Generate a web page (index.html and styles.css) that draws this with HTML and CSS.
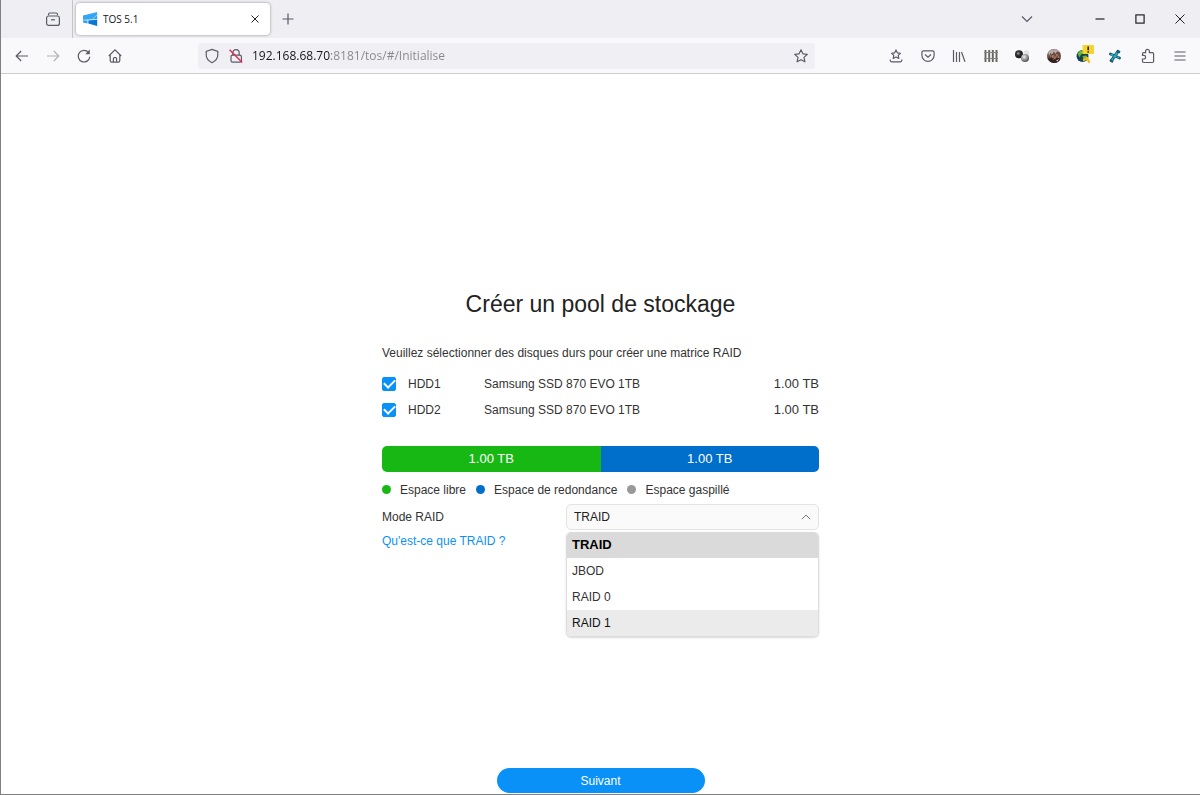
FILE: index.html
```html
<!DOCTYPE html>
<html lang="fr">
<head>
<meta charset="utf-8">
<meta name="viewport" content="width=device-width, initial-scale=1">
<title>TOS 5.1</title>
<link rel="stylesheet" href="styles.css">
</head>
<body class="window">
<header class="chrome">
  <div class="tabbar">
    <div class="tabbar-start">
      <button class="icon-btn" aria-label="Firefox View"><svg width="16" height="16" viewBox="0 0 16 16" class="stroke"><path d="M3.500 4.200V3.500Q3.500 2 5 2h6q1.500 0 1.500 1.500v.7"/><rect x="1.600" y="5" width="12.800" height="9.400" rx="2"/><path d="M6 8.800h4"/></svg></button>
    </div>
    <div class="tab">
      <svg class="favicon" width="15" height="14" viewBox="0 0 15 14"><path d="M0 3.600L14.200 0v7.200L0 8z" fill="#35a6f5"/><path d="M0 8.300l4.600-.1v3.200L0 10.600z" fill="#2b9df0"/><path d="M5.200 8.200l9-.5V14l-9-2.400z" fill="#0878d0"/><path d="M4.900 8v4M0 8.200l14.200-.7M9 7.700L14 3" stroke="#d9efff" stroke-width=".5"/></svg>
      <span class="tab-title">TOS 5.1</span>
      <button class="icon-btn tab-close" aria-label="Fermer l'onglet"><svg width="10" height="10" viewBox="0 0 10 10" class="stroke dark thin"><path d="M1.500 1.500l7 7M8.500 1.500l-7 7"/></svg></button>
    </div>
    <button class="icon-btn new-tab" aria-label="Nouvel onglet"><svg width="12" height="12" viewBox="0 0 12 12" class="stroke"><path d="M6 .5v11M.5 6h11"/></svg></button>
    <div class="window-controls">
      <button class="icon-btn list-tabs" aria-label="Lister les onglets"><svg width="12" height="8" viewBox="0 0 12 8" class="stroke"><path d="M1 1.500l5 5 5-5"/></svg></button>
      <button class="icon-btn win-btn" aria-label="Réduire"><svg width="10" height="10" viewBox="0 0 10 10" class="stroke dark"><path d="M.5 5h9"/></svg></button>
      <button class="icon-btn win-btn" aria-label="Agrandir"><svg width="10" height="10" viewBox="0 0 10 10" class="stroke dark"><rect x=".9" y=".9" width="8.200" height="8.200"/></svg></button>
      <button class="icon-btn win-btn" aria-label="Fermer"><svg width="10" height="10" viewBox="0 0 10 10" class="stroke dark thin"><path d="M.5.5l9 9M9.500.5l-9 9"/></svg></button>
    </div>
  </div>
  <nav class="toolbar" aria-label="Navigation">
    <button class="icon-btn nav-btn" aria-label="Précédent"><svg width="16" height="16" viewBox="0 0 16 16" class="stroke"><path d="M14 8H2.300M7.200 3L2.200 8l5 5"/></svg></button>
    <button class="icon-btn nav-btn faded" aria-label="Page suivante"><svg width="16" height="16" viewBox="0 0 16 16" class="stroke"><path d="M2 8h11.700M8.800 3l5 5-5 5"/></svg></button>
    <button class="icon-btn nav-btn" aria-label="Actualiser"><svg width="16" height="16" viewBox="0 0 16 16" class="stroke"><path d="M12.600 4.600A5.800 5.800 0 1 0 13.800 8.800"/><path d="M13.800 1.600v4.700H9.200z" fill="#5b5b66" stroke="none"/></svg></button>
    <button class="icon-btn nav-btn" aria-label="Accueil"><svg width="16" height="16" viewBox="0 0 16 16" class="stroke"><path d="M1.800 8L8 1.900 14.200 8M3.200 7v5.600q0 1.600 1.600 1.600h6.400q1.600 0 1.600-1.600V7"/><path d="M6.400 14V10.600q0-1 1-1h1.200q1 0 1 1V14"/></svg></button>
    <div class="urlbar">
      <button class="icon-btn url-btn" aria-label="Protection"><svg width="16" height="16" viewBox="0 0 16 16" class="stroke"><path d="M8 1.400l5.800 2v3.400c0 3.700-2.100 6.200-5.800 7.900-3.700-1.700-5.800-4.200-5.800-7.900V3.400z"/></svg></button>
      <button class="icon-btn url-btn" aria-label="Connexion non sécurisée"><svg width="16" height="16" viewBox="0 0 16 16" class="stroke"><path d="M4.800 7.200V4.800a3.200 3.200 0 0 1 6.400 0v2.400"/><rect x="3" y="7.200" width="10.400" height="7" rx="1.600"/><path d="M1.600 1.800l12.600 12.600" stroke="#e22850" stroke-width="1.400"/></svg></button>
      <input class="url-input" type="text" aria-label="Adresse" value="192.168.68.70:8181/tos/#/Initialise">
      <button class="icon-btn url-btn" aria-label="Marquer cette page"><svg width="16" height="16" viewBox="0 0 16 16" class="stroke"><path d="M8 1.800l1.900 4 4.400.6-3.300 3 .9 4.400L8 11.700l-3.900 2.100.9-4.400-3.300-3 4.400-.6z" stroke-linejoin="round"/></svg></button>
    </div>
    <div class="tools">
      <button class="icon-btn tool" aria-label="Marque-pages"><svg width="14" height="14" viewBox="0 0 14 14" class="stroke"><path d="M7 1l1.400 2.900 3 .4-2.200 2.100.6 3.100L7 8 4.200 9.500l.6-3.100-2.200-2.100 3-.4z" stroke-linejoin="round"/><path d="M1.200 10.500v.8q0 1.500 1.500 1.500h8.600q1.500 0 1.500-1.500v-.8"/></svg></button>
      <button class="icon-btn tool" aria-label="Pocket"><svg width="14" height="14" viewBox="0 0 14 14" class="stroke"><path d="M2.400 1.800h9.200q1.500 0 1.500 1.500v3a6.100 6.100 0 0 1-12.200 0v-3q0-1.500 1.500-1.500z"/><path d="M4 5.500l3 2.800 3-2.800"/></svg></button>
      <button class="icon-btn tool" aria-label="Bibliothèque"><svg width="14" height="14" viewBox="0 0 14 14" class="stroke"><path d="M1.500 1v12M4.500 3v10M7.500 3v10M9.500 3l3.500 9.700"/></svg></button>
      <button class="icon-btn tool" aria-label="Conteneurs"><svg width="16" height="14" viewBox="0 0 16 14" class="stroke"><path d="M2.500 1v12M6.200 1v12M9.800 1v12M13.500 1v12" stroke="#66665f" stroke-width="1.900"/><path d="M1 3.500h14M1 9.500h14" stroke="#85857f" stroke-width="1"/></svg></button>
      <button class="icon-btn tool" aria-label="Extension billes"><svg width="16" height="16" viewBox="0 0 16 16"><defs><radialGradient id="ball-dark" cx=".4" cy=".4" r=".6"><stop offset="0" stop-color="#aaa"/><stop offset=".4" stop-color="#333"/><stop offset="1" stop-color="#111"/></radialGradient><radialGradient id="ball-light" cx=".4" cy=".35" r=".7"><stop offset="0" stop-color="#eee"/><stop offset=".5" stop-color="#999"/><stop offset="1" stop-color="#444"/></radialGradient></defs><circle cx="12.500" cy="5" r="2.800" fill="#e2e2e2"/><circle cx="5" cy="6.200" r="4" fill="url(#ball-dark)"/><circle cx="11" cy="10" r="4" fill="url(#ball-light)"/></svg></button>
      <button class="icon-btn tool" aria-label="Extension globe brun"><svg width="16" height="16" viewBox="0 0 16 16"><circle cx="8" cy="8" r="7" fill="#6b4a40"/><path d="M2.200 4.500Q5 1 9 1.200q3 .5 4.500 3L11 3.500 9.500 6 8 3.500 6 6.500 4.500 5 3 8z" fill="#b5aeac"/><path d="M4 7l2 3 1-3 2 4 2-5 2 4" stroke="#a97b6b" fill="none"/><path d="M1.500 10q3 1 4-1l2 3 3-2 4 .5Q13 15 8 15q-5-.5-6.500-5z" fill="#33221f"/><path d="M10 12.500l3-1.500-1.500 2.500z" fill="#c8c2be"/></svg></button>
      <button class="icon-btn tool" aria-label="Extension avec alerte"><svg width="20" height="22" viewBox="0 0 20 22"><circle cx="7.500" cy="11" r="6" fill="#14405c"/><path d="M2.500 8.500q3-4 6-3L8 8.500l-2 1-1.500 3zM7.500 11l4-.5 1 3-3.500 3z" fill="#6aba32"/><path d="M8 15.500l4-3M10 14l5 2.500M12.500 12l1.500 6" stroke="#f2bc13" stroke-width="1.600" fill="none"/><rect x="7.500" y="0" width="11.500" height="9" rx="1" fill="#f6d32d"/><path d="M13.200 1.500v3.700M13.200 6.200v1.500" stroke="#332b00" stroke-width="1.600"/></svg></button>
      <button class="icon-btn tool" aria-label="Extension X"><svg width="20" height="16" viewBox="0 0 20 16"><path d="M4.500 12.500L11 3.500M3.500 6l9 4" stroke="#1c5c70" stroke-width="3" stroke-linecap="round" fill="none"/><path d="M4.500 12.500L11 3.500M4 6.200l8 3.500" stroke="#2fb4cf" stroke-width="1.600" stroke-dasharray="2.500 1" fill="none"/><path d="M10 2.500l3 2M3 12l3 2" stroke="#1c5c70" stroke-width="2.200"/></svg></button>
      <button class="icon-btn tool" aria-label="Extensions"><svg width="14" height="16" viewBox="0 0 14 16" class="stroke"><path d="M4.600 4.700V3.200a1.900 1.900 0 0 1 3.800 0v1.500h3q1.200 0 1.200 1.200v7.400q0 1.200-1.200 1.200H2.700q-1.200 0-1.200-1.200V11h1.300a1.800 1.800 0 0 0 0-3.600H1.500V5.900q0-1.200 1.200-1.200z"/></svg></button>
      <button class="icon-btn tool" aria-label="Menu"><svg width="12" height="12" viewBox="0 0 12 12" class="stroke"><path d="M.5 2h11M.5 6h11M.5 10h11"/></svg></button>
    </div>
  </nav>
</header>

<main class="page">
  <form class="wizard" id="pool">
    <h1 class="title">Créer un pool de stockage</h1>
    <p class="intro">Veuillez sélectionner des disques durs pour créer une matrice RAID</p>
    <table class="disks">
      <tbody>
        <tr><td class="col-check"><input class="check" type="checkbox" id="hdd1" checked></td><td class="col-slot"><label for="hdd1">HDD1</label></td><td>Samsung SSD 870 EVO 1TB</td><td class="col-size">1.00 TB</td></tr>
        <tr><td class="col-check"><input class="check" type="checkbox" id="hdd2" checked></td><td class="col-slot"><label for="hdd2">HDD2</label></td><td>Samsung SSD 870 EVO 1TB</td><td class="col-size">1.00 TB</td></tr>
      </tbody>
    </table>
    <div class="capacity">
      <div class="segment free" style="width:50%">1.00 TB</div>
      <div class="segment redundant" style="width:50%">1.00 TB</div>
    </div>
    <ul class="legend">
      <li class="legend-item"><span class="dot free"></span>Espace libre</li>
      <li class="legend-item"><span class="dot redundant"></span>Espace de redondance</li>
      <li class="legend-item"><span class="dot wasted"></span>Espace gaspillé</li>
    </ul>
    <div class="mode">
      <label for="raid">Mode RAID</label>
      <div class="picker">
        <select class="select" id="raid"><option>TRAID</option><option>JBOD</option><option>RAID 0</option><option>RAID 1</option></select>
        <svg class="caret" width="10" height="6" viewBox="0 0 10 6"><path d="M.8 5.200L5 1l4.200 4.200" fill="none" stroke="#777"/></svg>
        <ul class="menu" role="listbox" aria-label="Mode RAID">
          <li class="option selected" role="option" aria-selected="true">TRAID</li>
          <li class="option" role="option">JBOD</li>
          <li class="option" role="option">RAID 0</li>
          <li class="option hover" role="option">RAID 1</li>
        </ul>
      </div>
    </div>
    <a class="help" href="#traid">Qu'est-ce que TRAID ?</a>
  </form>
  <button class="next" type="submit" form="pool">Suivant</button>
</main>
</body>
</html>
```
FILE: styles.css
```css
* { box-sizing: border-box; }

.window {
  margin: 0;
  min-height: 100vh;
  display: flex;
  flex-direction: column;
  border-left: 1px solid #808080;
  border-bottom: 1px solid #808080;
  background: #fff;
  color: #333;
  font: 12px/20px "Liberation Sans", Arial, sans-serif;
}

.chrome { font-family: "Open Sans", "Noto Sans", sans-serif; }

.icon-btn {
  display: flex;
  align-items: center;
  justify-content: center;
  flex: none;
  padding: 0;
  border: 0;
  background: none;
}
.stroke { fill: none; stroke: #5b5b66; stroke-width: 1.2; }
.dark { stroke: #222; }
.thin { stroke-width: 1; }
.faded { opacity: 0.45; }

.tabbar {
  display: flex;
  align-items: center;
  height: 38px;
  background: #eeeef3;
}
.tabbar-start {
  display: flex;
  align-items: center;
  justify-content: flex-end;
  width: 72px;
  height: 38px;
  padding-right: 11px;
  border-right: 1px solid #c4c4ca;
}
.tab {
  display: flex;
  align-items: center;
  gap: 5px;
  flex: 0 1 194px;
  height: 32px;
  margin-left: 3px;
  padding: 0 10px 0 7px;
  border-radius: 4px;
  background: #fff;
  box-shadow: 0 0 3px rgba(0, 0, 0, 0.4);
}
.tab-title { flex: 1; color: #15141a; font-size: 10px; }
.new-tab { margin-left: 12px; }
.window-controls { display: flex; align-items: center; margin-left: auto; }
.list-tabs { width: 32px; margin-right: 37px; }
.win-btn { width: 40px; height: 38px; }

.toolbar {
  display: flex;
  align-items: center;
  height: 36px;
  padding: 0 5px;
  border-bottom: 1px solid #ccc;
  background: #f9f9fb;
}
.nav-btn { width: 31px; height: 32px; }
.urlbar {
  display: flex;
  align-items: center;
  gap: 8px;
  flex: 1;
  min-width: 0;
  height: 26px;
  margin: 0 65px 0 68px;
  padding: 0 6px;
  border-radius: 4px;
  background: #f0f0f4;
}
.url-input {
  flex: 1;
  min-width: 0;
  padding: 0;
  border: 0;
  background: linear-gradient(90deg, #15141a 79px, #85858c 79px);
  background-clip: text;
  -webkit-background-clip: text;
  color: transparent;
  font: 12px/20px "Open Sans", "Noto Sans", sans-serif;
}
.tools { display: flex; }
.tool { width: 32px; height: 32px; }
.tool:nth-child(even) { width: 31px; }

.page {
  flex: 1;
  display: flex;
  flex-direction: column;
  align-items: center;
}
.wizard { width: 100%; max-width: 437px; margin: auto; padding-bottom: 2px; }
.title {
  margin: 0 0 25px;
  color: #222;
  font-size: 23px;
  font-weight: 400;
  line-height: 28px;
  text-align: center;
}
.intro { margin: 0; }
.disks {
  width: 100%;
  margin: 8px 0 23px;
  border-collapse: collapse;
}
.disks td { height: 26px; padding: 0; }
.disks .col-check { width: 26px; }
.disks .col-slot { width: 76px; }
.disks .col-size { font-size: 13px; text-align: right; }
.check {
  display: flex;
  align-items: center;
  justify-content: center;
  width: 14px;
  height: 14px;
  margin: 0;
  appearance: none;
  border: 1px solid #0a91f7;
  border-radius: 2px;
}
.check:checked { background: #0a91f7; }
.check:checked::before {
  content: "";
  width: 9px;
  height: 5px;
  margin-bottom: 3px;
  border: solid #fff;
  border-width: 0 0 2px 2px;
  transform: rotate(-45deg);
}

.capacity { display: flex; border-radius: 5px; overflow: hidden; }
.segment { color: #fff; font-size: 13px; line-height: 26px; text-align: center; }
.free { background: #18b814; }
.redundant { background: #006fcb; }
.wasted { background: #999; }

.legend {
  display: flex;
  gap: 10px;
  margin: 8px 0 4px;
  padding: 0;
  list-style: none;
}
.legend-item { display: flex; align-items: center; gap: 9px; }
.dot { width: 9px; height: 9px; border-radius: 50%; }

.mode { display: flex; align-items: center; justify-content: space-between; }
.picker { position: relative; width: 253px; }
.select {
  display: block;
  width: 100%;
  height: 26px;
  padding: 0 7px;
  appearance: none;
  border: 1px solid #e4e4e4;
  border-radius: 5px;
  background: #fafafa;
  color: #222;
  font: inherit;
}
.caret { position: absolute; top: 10px; right: 8px; }
.menu {
  position: absolute;
  top: 100%;
  left: 0;
  right: 0;
  margin: 2px 0 0;
  padding: 0;
  border: 1px solid #ddd;
  border-top: 0;
  border-radius: 5px;
  overflow: hidden;
  background: #fff;
  box-shadow: 0 1px 2px rgba(0, 0, 0, 0.15);
  list-style: none;
}
.option { padding: 0 5px; line-height: 26px; }
.selected { background: #dadada; color: #000; font-size: 13px; font-weight: 700; }
.hover { background: #ebebeb; color: #111; }

.help { display: block; width: max-content; margin-top: 1px; color: #0a91f7; text-decoration: none; }
.next {
  width: 208px;
  height: 25px;
  margin-bottom: 1px;
  border: 0;
  border-radius: 13px;
  background: #0a91f7;
  color: #fff;
  font: inherit;
}
```
